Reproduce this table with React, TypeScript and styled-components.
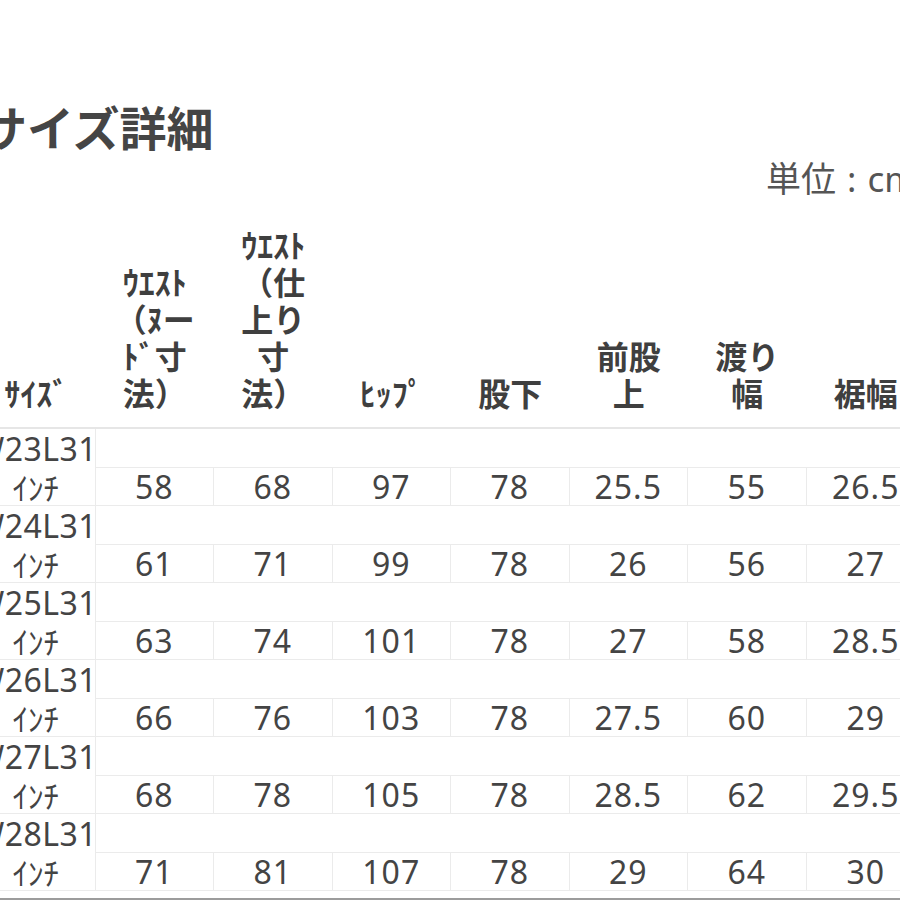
import React from 'react';
import styled, {createGlobalStyle} from 'styled-components';

const GlobalStyle = createGlobalStyle`
  html, body {
    margin: 0;
    padding: 0;
    background: #ffffff;
    overflow: hidden;
  }
  body {
    font-family: "Noto Sans", "Noto Sans CJK JP", sans-serif;
    color: #444444;
  }
`

const headers: string[][] = [
    ['ｻｲｽﾞ'],
    ['ｳｴｽﾄ', '（ﾇー', 'ﾄﾞ寸', '法）'],
    ['ｳｴｽﾄ', '（仕', '上り', '寸', '法）'],
    ['ﾋｯﾌﾟ'],
    ['股下'],
    ['前股', '上'],
    ['渡り', '幅'],
    ['裾幅'],
];

const sizes = [
    {name: 'W23L31', values: ['58', '68', '97', '78', '25.5', '55', '26.5']},
    {name: 'W24L31', values: ['61', '71', '99', '78', '26', '56', '27']},
    {name: 'W25L31', values: ['63', '74', '101', '78', '27', '58', '28.5']},
    {name: 'W26L31', values: ['66', '76', '103', '78', '27.5', '60', '29']},
    {name: 'W27L31', values: ['68', '78', '105', '78', '28.5', '62', '29.5']},
    {name: 'W28L31', values: ['71', '81', '107', '78', '29', '64', '30']},
];

export default function App() {
    return (
        <>
            <GlobalStyle/>
            <Sheet>
                <Title>サイズ詳細</Title>
                <Unit>単位 : cm</Unit>
                <HeaderRow>
                    {headers.map((lines, i) => (
                        <HeaderCell key={i}>
                            {lines.map((l, j) => <HeaderLine key={j}>{l}</HeaderLine>)}
                        </HeaderCell>
                    ))}
                </HeaderRow>
                {sizes.map(size => (
                    <SizeGroup key={size.name}>
                        <SizeLabel>
                            <SizeName>{size.name}</SizeName>
                            <SizeUnit>ｲﾝﾁ</SizeUnit>
                        </SizeLabel>
                        <ValueSide>
                            <Blank/>
                            <ValueRow>
                                {size.values.map((v, i) => <ValueCell key={i}>{v}</ValueCell>)}
                            </ValueRow>
                        </ValueSide>
                    </SizeGroup>
                ))}
                <BottomRule/>
            </Sheet>
        </>
    );
}

const Sheet = styled.div`
  margin-left: -23px;
  width: 948px;
`

const Title = styled.h1`
  margin: 0;
  padding: 98px 0 0 3px;
  font-family: "Noto Sans CJK JP", sans-serif;
  font-size: 47px;
  line-height: 56px;
  font-weight: 700;
  color: #454545;
`

const Unit = styled.div`
  margin-top: 3px;
  padding-right: 8px;
  text-align: right;
  font-family: "Noto Sans", "Noto Sans CJK JP", sans-serif;
  font-size: 35px;
  line-height: 44px;
  color: #555555;
  word-spacing: 2px;
`

const HeaderRow = styled.div`
  display: grid;
  grid-template-columns: repeat(8, 1fr);
  align-items: end;
  padding: 25px 0 16px;
  border-bottom: 2px solid #e6e6e6;
`

const HeaderCell = styled.div`
  display: flex;
  flex-direction: column;
  align-items: center;
  font-family: "Noto Sans CJK JP", sans-serif;
  font-size: 32px;
  line-height: 37px;
  font-weight: 700;
  color: #3f3f3f;
`

const HeaderLine = styled.span`
  white-space: nowrap;
`

const SizeGroup = styled.div`
  display: grid;
  grid-template-columns: 118.5px 1fr;
  border-bottom: 1px solid #ebebeb;
`

const SizeLabel = styled.div`
  display: flex;
  flex-direction: column;
  align-items: center;
  border-right: 1px solid #ebebeb;
`

const SizeName = styled.div`
  height: 39px;
  font-size: 32px;
  line-height: 39px;
  letter-spacing: 0.5px;
  color: #444444;
`

const SizeUnit = styled.div`
  height: 37px;
  font-family: "Noto Sans CJK JP", sans-serif;
  font-size: 31px;
  line-height: 37px;
  color: #444444;
`

const ValueSide = styled.div`
  display: flex;
  flex-direction: column;
`

const Blank = styled.div`
  height: 38px;
`

const ValueRow = styled.div`
  display: grid;
  grid-template-columns: repeat(7, 1fr);
  border-top: 1px solid #ebebeb;
`

const ValueCell = styled.div`
  height: 37px;
  text-align: center;
  font-size: 32px;
  line-height: 37px;
  letter-spacing: 1px;
  color: #444444;
  border-right: 1px solid #ebebeb;

  &:last-child {
    border-right: none;
  }
`

const BottomRule = styled.div`
  margin-top: 7px;
  border-top: 2px solid #9c9c9c;
`
